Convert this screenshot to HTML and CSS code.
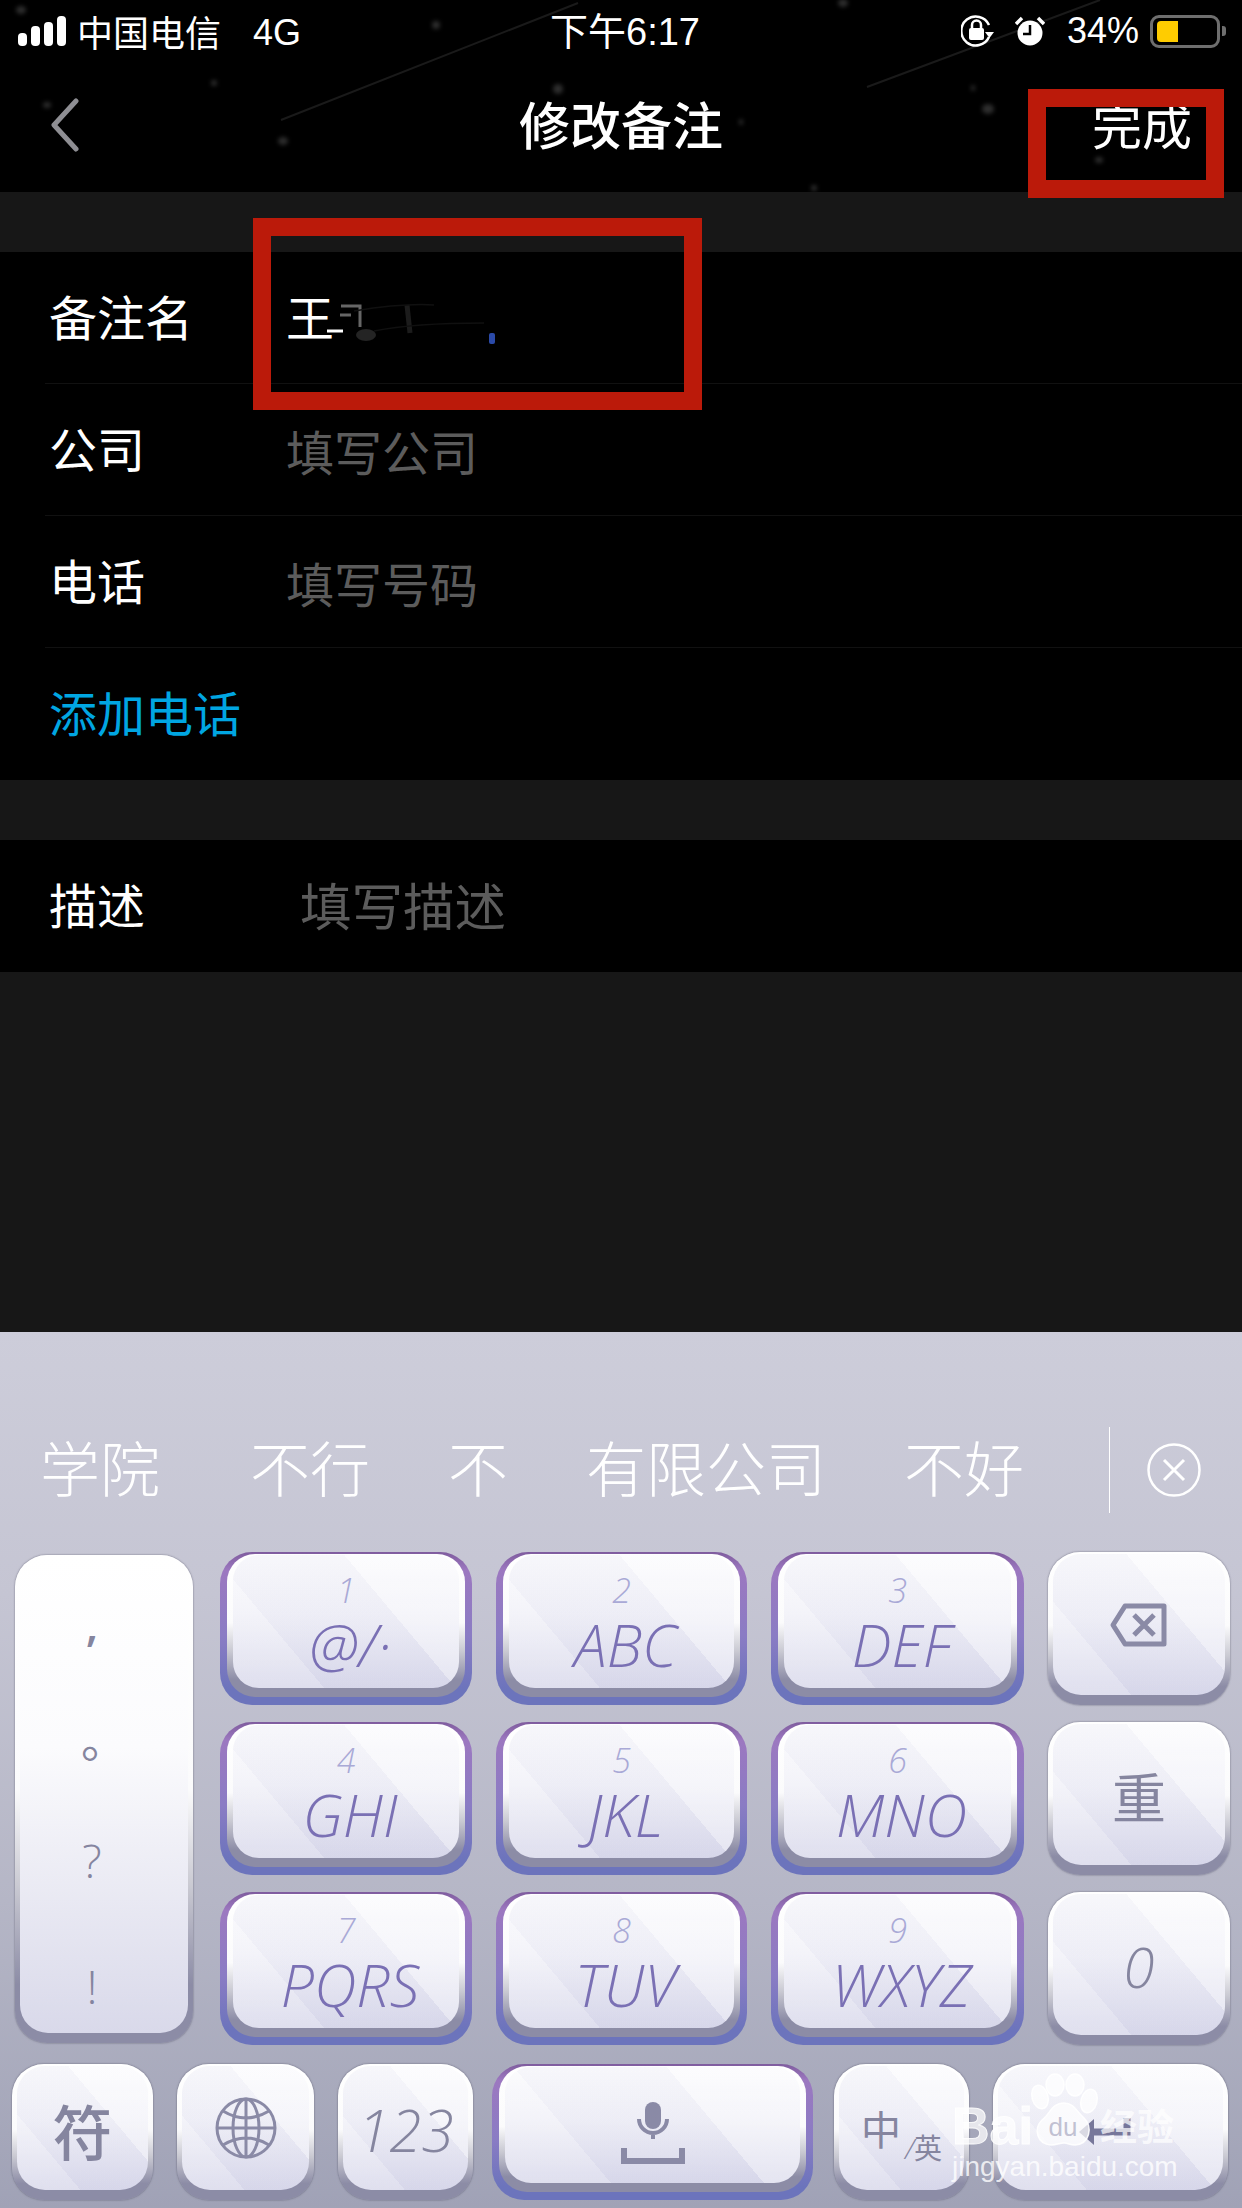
FILE: index.html
```html
<!DOCTYPE html>
<html lang="zh-CN">
<head>
  <meta charset="UTF-8">
  <title>修改备注</title>
  <link rel="stylesheet" href="styles.css">
</head>
<body>
<div class="page">
  <header class="top">
    <!-- faint star wallpaper behind the bar -->
    <svg class="stars" width="1242" height="192" viewBox="0 0 1242 192">
      <path d="M281 120L578 3M867 87L1100 0" stroke="#1a1a1a" stroke-width="2" fill="none"/>
      <g fill="#2e2e2e" class="star-dots">
        <ellipse cx="21" cy="10" rx="5" ry="4"/><ellipse cx="436" cy="25" rx="4" ry="4"/>
        <ellipse cx="214" cy="83" rx="3" ry="3"/><ellipse cx="558" cy="89" rx="5" ry="5"/>
        <ellipse cx="973" cy="88" rx="2" ry="3"/><ellipse cx="47" cy="105" rx="4" ry="3"/>
        <ellipse cx="283" cy="141" rx="5" ry="4"/><ellipse cx="741" cy="122" rx="2" ry="3"/>
        <ellipse cx="988" cy="109" rx="6" ry="5"/><ellipse cx="1099" cy="160" rx="4" ry="3"/>
        <ellipse cx="814" cy="188" rx="3" ry="3"/><ellipse cx="843" cy="3" rx="5" ry="4"/>
      </g>
    </svg>
    <div class="status">
      <div class="status-left">
        <svg width="50" height="32" viewBox="0 0 50 32">
          <rect x="0" y="17" width="9" height="13" rx="4" fill="#fff"/>
          <rect x="13" y="10" width="9" height="20" rx="4" fill="#fff"/>
          <rect x="26" y="6" width="9" height="24" rx="4" fill="#fff"/>
          <rect x="39" y="0" width="9" height="30" rx="4" fill="#fff"/>
        </svg>
        <span class="carrier">中国电信</span>
        <span class="net">4G</span>
      </div>
      <div class="clock">下午6:17</div>
      <div class="status-right">
        <svg width="34" height="32" viewBox="0 0 34 32">
          <path d="M28 22A14.500 14.500 0 1 1 28 10" fill="none" stroke="#fff" stroke-width="2.500"/>
          <path d="M24 17h9l-4.500 6z" fill="#fff"/>
          <rect x="8" y="13" width="15" height="12" rx="2" fill="#fff"/>
          <path d="M11 14V10a4.500 4.500 0 0 1 9 0v4" fill="none" stroke="#fff" stroke-width="2.500"/>
        </svg>
        <svg class="alarm" width="30" height="30" viewBox="0 0 30 30">
          <circle cx="15" cy="17" r="12.500" fill="#fff"/>
          <path d="M15 9v9H8" fill="none" stroke="#000" stroke-width="2.500"/>
          <path d="M1 8l6-6M29 8l-6-6" stroke="#fff" stroke-width="3.500"/>
        </svg>
        <span class="percent">34%</span>
        <div class="battery"><div class="battery-level"></div></div>
        <div class="battery-nub"></div>
      </div>
    </div>
    <nav class="nav">
      <svg class="back" width="30" height="54" viewBox="0 0 30 54">
        <path d="M26 3L4 27l22 24" fill="none" stroke="#8e8e93" stroke-width="5" stroke-linecap="round" stroke-linejoin="round"/>
      </svg>
      <h1 class="title">修改备注</h1>
      <div class="done">完成</div>
    </nav>
  </header>

  <section class="group first">
    <div class="row">
      <span class="label">备注名</span>
      <span class="value">王<svg class="smudge" width="170" height="60" viewBox="0 0 170 60">
        <path d="M-7 46h16" stroke="#fff" stroke-width="3"/>
        <path d="M7 21h19v21" fill="none" stroke="#666" stroke-width="3"/>
        <path d="M6 30h11" stroke="#666" stroke-width="3"/>
        <ellipse cx="32" cy="50" rx="10" ry="6" fill="#242424"/>
        <path d="M73 20l3 28" stroke="#1c1c1c" stroke-width="5"/>
        <path d="M20 26q50-8 80-6M40 46q40-8 110-8" fill="none" stroke="#101010" stroke-width="1.500"/>
        <rect x="155" y="48" width="6" height="11" rx="2" fill="#2b4aa8"/>
      </svg></span>
    </div>
    <div class="row">
      <span class="label">公司</span>
      <span class="hint">填写公司</span>
    </div>
    <div class="row">
      <span class="label">电话</span>
      <span class="hint">填写号码</span>
    </div>
    <div class="row last">
      <span class="add">添加电话</span>
    </div>
  </section>

  <section class="group">
    <div class="row last">
      <span class="label">描述</span>
      <span class="hint wide">填写描述</span>
    </div>
  </section>

  <div class="spacer"></div>

  <section class="keyboard">
    <div class="candidates">
      <span class="cand cand-first">学院</span>
      <span class="cand">不行</span>
      <span class="cand">不</span>
      <span class="cand">有限公司</span>
      <span class="cand">不好</span>
      <span class="cand-divider"></span>
      <svg class="cand-close" width="56" height="56" viewBox="0 0 56 56">
        <circle cx="28" cy="28" r="25.500" fill="none" stroke="#fff" stroke-width="2.500"/>
        <path d="M18 18l20 20M38 18L18 38" stroke="#fff" stroke-width="3"/>
      </svg>
    </div>

    <div class="keys">
      <div class="key punct">
        <div class="key-body"><div class="key-face punct-face">
          <span class="p-comma">,</span><span class="p-stop">。</span><span class="p-ask">?</span><span class="p-bang">!</span>
        </div></div>
      </div>

      <div class="key accent"><div class="key-body"><div class="key-face"><span class="num">1</span><span class="letters">@/·</span></div></div></div>
      <div class="key accent"><div class="key-body"><div class="key-face"><span class="num">2</span><span class="letters">ABC</span></div></div></div>
      <div class="key accent"><div class="key-body"><div class="key-face"><span class="num">3</span><span class="letters">DEF</span></div></div></div>
      <div class="key"><div class="key-body"><div class="key-face">
        <svg width="58" height="44" viewBox="0 0 58 44">
          <path d="M3 22L15 3h39v38H15z" fill="none" stroke="#8a8aa6" stroke-width="5" stroke-linejoin="round"/>
          <path d="M24 12l20 20M44 12L24 32" stroke="#8a8aa6" stroke-width="5"/>
        </svg>
      </div></div></div>

      <div class="key accent"><div class="key-body"><div class="key-face"><span class="num">4</span><span class="letters">GHI</span></div></div></div>
      <div class="key accent"><div class="key-body"><div class="key-face"><span class="num">5</span><span class="letters">JKL</span></div></div></div>
      <div class="key accent"><div class="key-body"><div class="key-face"><span class="num">6</span><span class="letters">MNO</span></div></div></div>
      <div class="key"><div class="key-body"><div class="key-face"><span class="func cjk">重</span></div></div></div>

      <div class="key accent"><div class="key-body"><div class="key-face"><span class="num">7</span><span class="letters">PQRS</span></div></div></div>
      <div class="key accent"><div class="key-body"><div class="key-face"><span class="num">8</span><span class="letters">TUV</span></div></div></div>
      <div class="key accent"><div class="key-body"><div class="key-face"><span class="num">9</span><span class="letters">WXYZ</span></div></div></div>
      <div class="key"><div class="key-body"><div class="key-face"><span class="func">0</span></div></div></div>
    </div>

    <div class="bottom-keys">
      <div class="key w-sym"><div class="key-body"><div class="key-face"><span class="func cjk sym">符</span></div></div></div>
      <div class="key w-globe"><div class="key-body"><div class="key-face">
        <svg width="62" height="62" viewBox="0 0 62 62" fill="none" stroke="#8a8aa6" stroke-width="3">
          <ellipse cx="31" cy="31" rx="29" ry="29"/>
          <ellipse cx="31" cy="31" rx="13" ry="29"/>
          <path d="M31 2v58M2 31h58M8 14q23 14 46 0M8 48q23-14 46 0"/>
        </svg>
      </div></div></div>
      <div class="key w-num"><div class="key-body"><div class="key-face"><span class="func f-123">123</span></div></div></div>
      <div class="key accent w-space"><div class="key-body"><div class="key-face">
        <svg class="mic" width="64" height="62" viewBox="0 0 64 62">
          <rect x="24" y="0" width="16" height="27" rx="8" fill="#8a8aa6"/>
          <path d="M18 17a14 14 0 0 0 28 0M32 31v6" fill="none" stroke="#8a8aa6" stroke-width="4"/>
          <path d="M3 46v13h58V46" fill="none" stroke="#8a8aa6" stroke-width="6"/>
        </svg>
      </div></div></div>
      <div class="key w-lang"><div class="key-body"><div class="key-face">
        <div class="lang"><span class="lang-zh">中</span><span class="lang-en"><i>/</i>英</span></div>
      </div></div></div>
      <div class="key w-enter"><div class="key-body"><div class="key-face">
        <svg class="enter" width="52" height="30" viewBox="0 0 52 30">
          <path d="M0 16L15 3v26z" fill="#77779a"/>
          <path d="M12 16h36V2" fill="none" stroke="#77779a" stroke-width="7"/>
        </svg>
      </div></div></div>
    </div>
  </section>

  <!-- things drawn on top of the screenshot -->
  <div class="mark mark-done"></div>
  <div class="mark mark-name"></div>
  <div class="watermark">
    <div class="wm-logo">
      <span class="wm-bai">Bai</span>
      <svg class="paw" width="70" height="75" viewBox="0 0 70 75">
        <g fill="rgba(255,255,255,.72)" stroke="rgba(255,255,255,.9)" stroke-width="1.500">
          <ellipse cx="10" cy="24" rx="8" ry="12" transform="rotate(-15 10 24)"/>
          <ellipse cx="25" cy="12" rx="9" ry="11"/>
          <ellipse cx="45" cy="12" rx="9" ry="11"/>
          <ellipse cx="59" cy="28" rx="8" ry="12" transform="rotate(15 59 28)"/>
          <path d="M34 30c10 0 13 9 20 15 9 9 6 26-9 27-5 0-7-2-11-2s-7 2-13 2C7 71 3 56 12 47c8-6 10-17 22-17z"/>
        </g>
        <text x="33" y="63" text-anchor="middle" class="paw-du">du</text>
      </svg>
      <span class="wm-cjk">经验</span>
    </div>
    <div class="wm-url">jingyan.baidu.com</div>
  </div>
</div>
</body>
</html>
```

FILE: styles.css
```css
* {
  box-sizing: border-box;
}
html, body {
  margin: 0;
  padding: 0;
}
body {
  background: #171717;
  font-family: "Noto Sans CJK SC", "Liberation Sans", sans-serif;
}
.page {
  position: relative;
  width: 1242px;
  height: 2208px;
  overflow: hidden;
  display: flex;
  flex-direction: column;
}

/* header */
.top {
  position: relative;
  height: 192px;
  background: #000;
  color: #fff;
}
.stars {
  position: absolute;
  left: 0;
  top: 0;
}
.star-dots {
  filter: blur(2px);
}
.status {
  position: relative;
  height: 62px;
  padding: 0 16px 0 18px;
  display: grid;
  grid-template-columns: 1fr auto 1fr;
  align-items: center;
}
.status-left {
  display: flex;
  align-items: center;
}
.status-left svg {
  margin-top: 2px;
}
.carrier {
  margin-left: 9px;
  font-size: 36px;
  line-height: 44px;
}
.net {
  margin-left: 32px;
  padding-top: 3px;
  font-family: "Liberation Sans", sans-serif;
  font-size: 36px;
}
.clock {
  padding: 1px 0 0 6px;
  font-size: 38px;
  line-height: 44px;
  font-family: "Liberation Sans", "Noto Sans CJK SC", sans-serif;
}
.status-right {
  display: flex;
  align-items: center;
  justify-content: flex-end;
}
.alarm {
  margin-left: 20px;
}
.percent {
  margin-left: 22px;
  font-family: "Liberation Sans", sans-serif;
  font-size: 36px;
}
.battery {
  margin-left: 11px;
  width: 70px;
  height: 33px;
  padding: 3px 4px;
  border: 3px solid #6e6e6e;
  border-radius: 9px;
}
.battery-level {
  width: 21px;
  height: 21px;
  border-radius: 4px 0 0 4px;
  background: #ffcc00;
}
.battery-nub {
  width: 4px;
  height: 10px;
  margin-left: 2px;
  border-radius: 0 3px 3px 0;
  background: #6e6e6e;
}
.nav {
  position: relative;
  height: 130px;
  display: grid;
  grid-template-columns: 1fr auto 1fr;
  align-items: center;
  padding: 0 50px 8px 50px;
}
.back {
  margin-top: 4px;
}
.title {
  margin: 0;
  font-size: 51px;
  font-weight: 500;
  line-height: 66px;
}
.done {
  justify-self: end;
  font-size: 50px;
  font-weight: 400;
  line-height: 66px;
}

/* form */
.group {
  margin-top: 60px;
  background: #000;
}
.row {
  height: 132px;
  margin-left: 45px;
  padding: 0 0 6px 4px;
  display: flex;
  align-items: center;
  border-bottom: 1px solid #111;
  color: #fff;
  font-size: 48px;
}
.row.last {
  border-bottom: 0;
}
.label {
  width: 237px;
  flex: none;
}
.value {
  display: flex;
  align-items: center;
}
.smudge {
  overflow: visible;
}
.hint {
  padding-top: 7px;
  color: #5c5c5c;
  font-size: 48px;
}
.hint.wide {
  margin-left: 14px;
  padding-top: 0;
  font-size: 51.500px;
}
.add {
  color: #00a6e2;
  font-size: 48px;
}
.spacer {
  flex: 1;
}

/* keyboard */
.keyboard {
  height: 876px;
  flex: none;
  background: linear-gradient(to bottom, #cdcdda 0%, #c5c5d3 30%, #b5b6c6 65%, #a0a2b6 100%);
}
.candidates {
  height: 220px;
  padding: 95px 0 39px 40px;
  display: flex;
  align-items: center;
  color: #fff;
}
.cand {
  margin: -8px 78px 0 0;
  font-size: 60px;
  font-weight: 300;
  line-height: 70px;
}
.cand-first {
  margin-right: 90px;
}
.cand-divider {
  width: 1px;
  height: 86px;
  margin-left: 7px;
  background: #fff;
}
.cand-close {
  margin-left: 36px;
}
.keys {
  margin-left: 15px;
  display: grid;
  grid-template-columns: 181px 252px 251px 253px 182px;
  grid-auto-rows: 153px;
  gap: 17px 24px;
}
.key {
  height: 100%;
  border-radius: 32px;
  box-shadow: 0 0 2px rgba(60, 60, 80, .7);
}
.key-body {
  height: 100%;
  padding: 2px 5px 10px;
  border-radius: 32px;
  background: linear-gradient(to bottom, #fff 0%, #fbfbfc 48%, #c9c9d2 68%, #8c8ca6 88%);
}
.key-face {
  height: 100%;
  border-radius: 28px;
  display: flex;
  flex-direction: column;
  align-items: center;
  justify-content: center;
  background:
    linear-gradient(50deg, rgba(255, 255, 255, .16) 0 27%, rgba(150, 150, 200, .04) 27% 66%, rgba(255, 255, 255, .3) 66% 100%),
    linear-gradient(to bottom, #fbfbfd 0%, #f1f1f8 45%, #d9d9eb 100%);
}
.key.accent {
  padding: 2px 7px 8px;
  box-shadow: none;
  background: linear-gradient(to bottom, #7f5c9e 0, #9c78c0 12%, #8a7cc4 55%, #6c74bc 90%);
}
.key.accent .key-body {
  padding: 1px 6px 9px;
  border-radius: 28px;
}
.key.accent .key-face {
  border-radius: 26px;
}
.num {
  margin-top: 2px;
  font-family: "Open Sans", sans-serif;
  font-size: 34px;
  font-style: italic;
  font-weight: 300;
  line-height: 42px;
  color: #a9a9d6;
}
.letters {
  padding-left: 8px;
  font-family: "Open Sans", sans-serif;
  font-size: 59px;
  font-style: italic;
  font-weight: 300;
  line-height: 66px;
  color: #7a70b4;
}
.func {
  padding-top: 3px;
  font-family: "Open Sans", sans-serif;
  font-size: 56px;
  font-style: italic;
  font-weight: 300;
  line-height: 70px;
  color: #85859f;
}
.func.cjk {
  font-family: "Noto Sans CJK SC", sans-serif;
  font-style: normal;
  font-weight: 400;
  font-size: 54px;
}
.func.sym {
  font-size: 60px;
  font-weight: 500;
}
.f-123 {
  font-size: 58px;
}

/* tall punctuation key */
.key.punct {
  grid-row: span 3;
  width: 178px;
  height: auto;
  margin: 3px 0 2px;
}
.key-face.punct-face {
  padding: 36px 24px 0 0;
  justify-content: flex-start;
  background: linear-gradient(to bottom, #fff 0%, #fbfbfd 40%, #d9d9ea 100%);
  color: #85859f;
  font-family: "Open Sans", sans-serif;
  font-size: 46px;
  font-weight: 300;
}
.punct-face span {
  height: 60px;
  line-height: 60px;
}
.p-comma {
  font-weight: 600;
}
.p-stop {
  margin: 56px 0 0 24px;
}
.p-ask {
  margin-top: 61px;
}
.p-bang {
  margin-top: 66px;
}

/* bottom row */
.bottom-keys {
  height: 136px;
  margin: 19px 0 0 12px;
  display: flex;
  gap: 24px;
}
.w-sym { width: 141px; }
.w-globe { width: 137px; }
.w-num { width: 135px; }
.w-space { width: 321px; margin: 0 -3px 0 -5px; }
.w-lang { width: 135px; }
.w-enter { width: 235px; }
.mic {
  margin-top: 16px;
}
.enter {
  margin: 6px 0 0 -12px;
}
.lang {
  display: flex;
  align-items: flex-end;
  color: #85859f;
}
.lang-zh {
  font-size: 40px;
  line-height: 44px;
}
.lang-en {
  margin: 0 0 -16px 4px;
  font-size: 28px;
  line-height: 36px;
}
.lang-en i {
  font-family: "Open Sans", sans-serif;
  font-weight: 300;
}

/* red marker boxes */
.mark {
  position: absolute;
  border: 18px solid #bb1a0a;
}
.mark-done {
  left: 1028px;
  top: 89px;
  width: 196px;
  height: 109px;
}
.mark-name {
  left: 253px;
  top: 218px;
  width: 449px;
  height: 192px;
}

/* baidu watermark */
.watermark {
  position: absolute;
  left: 952px;
  top: 2073px;
  width: 240px;
  color: rgba(255, 255, 255, .72);
  font-family: "Liberation Sans", sans-serif;
}
.wm-logo {
  height: 75px;
  display: flex;
  align-items: flex-end;
}
.wm-bai {
  margin: 0 -3px -8px 0;
  font-size: 52px;
  font-weight: 700;
  line-height: 60px;
  -webkit-text-stroke: 1px rgba(255, 255, 255, .85);
}
.paw {
  flex: none;
}
.paw-du {
  font-family: "Liberation Sans", sans-serif;
  font-size: 26px;
  fill: rgba(185, 185, 205, .9);
}
.wm-cjk {
  margin-bottom: -2px;
  font-family: "Noto Sans CJK SC", sans-serif;
  font-size: 37px;
  font-weight: 700;
  line-height: 50px;
}
.wm-url {
  padding-top: 2px;
  font-size: 28px;
  line-height: 34px;
  white-space: nowrap;
  color: rgba(255, 255, 255, .8);
}
```
